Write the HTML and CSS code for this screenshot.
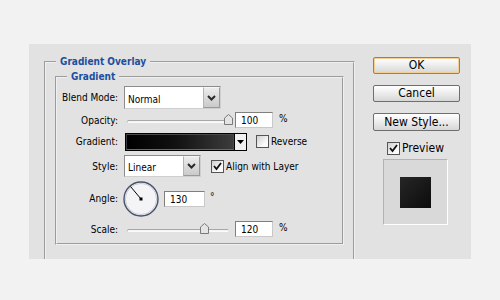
FILE: index.html
```html
<!DOCTYPE html>
<html lang="en">

<head>
  <meta charset="UTF-8">
  <title>Layer Style</title>
  <link rel="stylesheet" href="styles.css">
</head>

<body>
  <div class="dialog">
    <fieldset class="group">
      <legend>Gradient Overlay</legend>
      <fieldset class="sub">
        <legend>Gradient</legend>
        <div class="rows">
          <div class="label">Blend Mode:</div>
          <div class="ctl">
            <div class="select blend">
              <span class="value">Normal</span>
              <span class="drop"><svg width="9" height="6" viewBox="0 0 9 6"><path d="M1 1 L4.5 4.5 L8 1" fill="none" stroke="#2a2a2a" stroke-width="2"/></svg></span>
            </div>
          </div>

          <div class="label">Opacity:</div>
          <div class="ctl">
            <div class="slider">
              <div class="track"></div>
              <svg class="thumb" style="left: 97px" width="9" height="11" viewBox="0 0 9 11"><path d="M0.5 4 L4.5 0.5 L8.5 4 L8.5 10.5 L0.5 10.5 Z" fill="#e4e4e4" stroke="#7a7a7a"/></svg>
            </div>
            <div class="num">100</div>
            <span class="unit">%</span>
          </div>

          <div class="label">Gradient:</div>
          <div class="ctl">
            <div class="grad">
              <div class="ramp"></div>
              <div class="gdrop"><svg width="7" height="4" viewBox="0 0 7 4"><path d="M0 0 L7 0 L3.5 4 Z" fill="#000"/></svg></div>
            </div>
            <div class="check reverse"></div>
            <span class="opt">Reverse</span>
          </div>

          <div class="label">Style:</div>
          <div class="ctl">
            <div class="select style">
              <span class="value">Linear</span>
              <span class="drop"><svg width="9" height="6" viewBox="0 0 9 6"><path d="M1 1 L4.5 4.5 L8 1" fill="none" stroke="#2a2a2a" stroke-width="2"/></svg></span>
            </div>
            <div class="check align"><svg width="11" height="11" viewBox="0 0 11 11"><path d="M2 5 L4.5 8 L9 2" fill="none" stroke="#111" stroke-width="1.8"/></svg></div>
            <span class="opt">Align with Layer</span>
          </div>

          <div class="label">Angle:</div>
          <div class="ctl">
            <svg class="dial" width="36" height="36" viewBox="0 0 36 36">
              <circle cx="18" cy="18" r="17" fill="#f4f4f6" stroke="#48506a" stroke-width="1.4"/>
              <circle cx="18" cy="18" r="15.6" fill="none" stroke="#c9ccd6" stroke-width="1"/>
              <line x1="18" y1="18" x2="7.6" y2="5.6" stroke="#000" stroke-width="1"/>
              <rect x="16.5" y="16.5" width="3" height="3" fill="#000"/>
            </svg>
            <div class="num angle">130</div>
            <span class="deg">°</span>
          </div>

          <div class="label">Scale:</div>
          <div class="ctl">
            <div class="slider">
              <div class="track"></div>
              <svg class="thumb" style="left: 73px" width="9" height="11" viewBox="0 0 9 11"><path d="M0.5 4 L4.5 0.5 L8.5 4 L8.5 10.5 L0.5 10.5 Z" fill="#e4e4e4" stroke="#7a7a7a"/></svg>
            </div>
            <div class="num">120</div>
            <span class="unit">%</span>
          </div>
        </div>
      </fieldset>
    </fieldset>

    <div class="side">
      <div class="btn ok">OK</div>
      <div class="btn">Cancel</div>
      <div class="btn newstyle">New Style...</div>
      <div class="preview-row">
        <div class="check"><svg width="11" height="11" viewBox="0 0 11 11"><path d="M2 5 L4.5 8 L9 2" fill="none" stroke="#111" stroke-width="1.8"/></svg></div>
        <span>Preview</span>
      </div>
      <div class="preview">
        <div class="swatch"></div>
      </div>
    </div>
  </div>
</body>

</html>
```

FILE: styles.css
```css
body {
  margin: 0;
  background: #f2f2f2;
  font-family: "DejaVu Sans Condensed", "DejaVu Sans", sans-serif;
  font-size: 10px;
  color: #000;
}
.dialog {
  display: flex;
  align-items: flex-start;
  width: 442px;
  height: 215px;
  margin: 44px 0 0 29px;
  padding: 11px 0 0 15px;
  box-sizing: border-box;
  background: #e2e2e2;
  overflow: hidden;
}
fieldset {
  margin: 0;
  border: 2px groove #f0f0f0;
}
legend {
  font-size: 10px;
  font-weight: bold;
  line-height: 14px;
  color: #1d4e9e;
  padding: 0 4px;
}
.group {
  flex: none;
  width: 311px;
  height: 240px;
  box-sizing: border-box;
  padding: 0 0 0 9px;
}
.group > legend {
  margin-left: 1px;
}
.sub {
  width: 289px;
  height: 175px;
  box-sizing: border-box;
  margin-top: 1px;
  padding: 2px 0 0 0;
}
.sub > legend {
  margin-left: 10px;
}
.rows {
  display: grid;
  grid-template-columns: 61px 1fr;
  grid-template-rows: 23px 22px 21px 28px 37px 24px;
  column-gap: 6px;
}
.label {
  text-align: right;
  align-self: center;
}
.ctl {
  display: flex;
  align-items: center;
}
.select {
  display: flex;
  box-sizing: border-box;
  background: #fff;
  border: 1px solid;
  border-color: #8c8c8c #cfcfcf #cfcfcf #8c8c8c;
}
.select .value {
  flex: 1;
  padding: 3px 0 0 3px;
  align-self: center;
}
.select .drop {
  width: 15px;
  display: flex;
  align-items: center;
  justify-content: center;
  border: 1px solid;
  border-color: #f6f6f6 #9a9a9a #9a9a9a #b4b4b4;
  background: linear-gradient(#ececec, #cacaca);
}
.blend {
  width: 97px;
  height: 23px;
}
.style {
  width: 77px;
  height: 22px;
}
.slider {
  position: relative;
  width: 104px;
  height: 12px;
  margin-left: 3px;
}
.track {
  position: absolute;
  left: 0;
  right: 2px;
  top: 6px;
  height: 3px;
  box-sizing: border-box;
  border-radius: 2px;
  border: 1px solid;
  border-color: #a8a8a8 #e6e6e6 #fafafa #b8b8b8;
  background: #f4f4f4;
}
.thumb {
  position: absolute;
  top: 0;
}
.num {
  width: 38px;
  height: 16px;
  box-sizing: border-box;
  margin-left: 4px;
  padding: 1px 0 0 5px;
  line-height: 13px;
  background: #fff;
  border: 1px solid;
  border-color: #7f7f7f #c8c8c8 #c8c8c8 #7f7f7f;
}
.unit {
  margin-left: 6px;
  margin-top: -3px;
}
.grad {
  display: flex;
  width: 122px;
  height: 18px;
  margin-left: 1px;
  box-sizing: border-box;
  border: 1px solid #000;
}
.ramp {
  flex: 1;
  border: 1px solid;
  border-color: #4a4a4a #4a4a4a #6a6a6a #3a3a3a;
  background: linear-gradient(90deg, #000 0%, #111 45%, #3c3c3c 100%);
}
.gdrop {
  width: 11px;
  display: flex;
  align-items: center;
  justify-content: center;
  border-left: 1px solid #000;
  background: #f0f0f0;
}
.check {
  width: 13px;
  height: 13px;
  box-sizing: border-box;
  border: 1px solid #555;
  background: linear-gradient(135deg, #cfcfcf, #fbfbfb 70%);
  display: flex;
  align-items: center;
  justify-content: center;
  flex: none;
}
.check svg {
  display: block;
}
.reverse {
  margin-left: 9px;
}
.align {
  margin-left: 10px;
}
.opt {
  margin-left: 2px;
}
.dial {
  margin-left: -1px;
}
.angle {
  width: 41px;
  margin-left: 5px;
}
.deg {
  margin-left: 5px;
  margin-top: -5px;
}
.side {
  display: flex;
  flex-direction: column;
  width: 87px;
  margin-left: 18px;
  padding-top: 2px;
  font-size: 12px;
}
.btn {
  height: 17px;
  box-sizing: border-box;
  border: 1px solid #6e6e6e;
  border-radius: 2px;
  background: linear-gradient(#ffffff, #f0f0f0 40%, #d6d6d6);
  text-align: center;
  line-height: 15px;
  margin-bottom: 11px;
}
.btn.ok {
  border-color: #b67a33;
  box-shadow: inset 0 0 0 1px #f3cf96;
}
.btn.newstyle {
  height: 18px;
  line-height: 16px;
  margin-bottom: 10px;
}
.preview-row {
  display: flex;
  align-items: center;
  margin-left: 14px;
}
.preview-row span {
  margin-left: 2px;
}
.preview {
  width: 65px;
  height: 66px;
  box-sizing: border-box;
  margin: 4px 0 0 10px;
  border: 1px solid;
  border-color: #b3b3b3 #fff #fff #b3b3b3;
  background: #d9d9d9;
  display: flex;
  align-items: center;
  justify-content: center;
}
.swatch {
  width: 31px;
  height: 31px;
  background: linear-gradient(135deg, #262626, #0c0c0c);
}
```
